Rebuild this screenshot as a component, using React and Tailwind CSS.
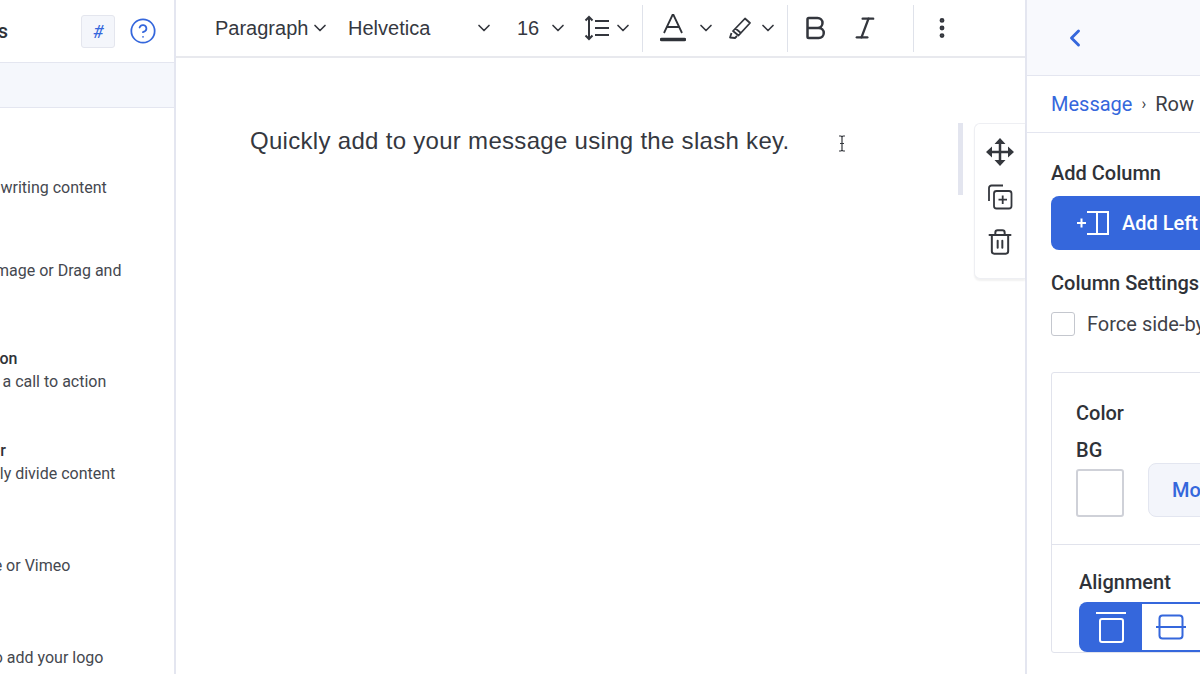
import React from "react";
import { ChevronDown, ChevronLeft, Bold, Italic, MoreVertical, Trash2, HelpCircle } from "lucide-react";

const ui = { fontFamily: "Roboto, sans-serif" };
const helv = { fontFamily: "'Liberation Sans', Arial, sans-serif" };

const rows = [
  { h: "h-[84px]", ml: "ml-[-38px]", t: "Text", d: "Start writing content" },
  { h: "h-[112px]", ml: "ml-[-63px]", t: "Image", d: "Upload image or Drag and" },
  { h: "h-[93px]", ml: "ml-[-30px]", t: "Button", d: "Add a call to action" },
  { h: "h-[93px]", ml: "ml-[-44px]", t: "Divider", d: "Visually divide content" },
  { h: "h-[93px]", ml: "ml-[-60px]", t: "Video", d: "YouTube or Vimeo" },
  { h: "h-[93px]", ml: "ml-[-50px]", t: "Logo", d: "Click to add your logo" },
];

function Chev({ className = "" }) {
  return <ChevronDown size={20} strokeWidth={2} className={`text-[#33363d] ${className}`} />;
}

function Sep({ className = "" }) {
  return <div className={`w-px h-[47px] bg-[#dfe2ea] ${className}`} />;
}

function Toolbar() {
  return (
    <div className="h-[58px] shrink-0 flex items-center bg-white border-b-2 border-[#e8e9ee] text-[#35383f] text-[20px]" style={helv}>
      <span className="ml-[39px] w-[99px]">Paragraph</span>
      <Chev className="ml-[-4px]" />
      <span className="ml-[18px] w-[126px]">Helvetica</span>
      <Chev />
      <span className="ml-[23px] w-[30px]">16</span>
      <Chev className="ml-[1px]" />
      <svg className="ml-[15px]" width="28" height="28" viewBox="0 0 28 28" fill="none" stroke="#33363d" strokeWidth="2">
        <path d="M6 3v22M2.5 6.5 6 3l3.5 3.5M2.500 21.500 6 25l3.500-3.500" />
        <path d="M12 7h14M12 14h14M12 21h14" />
      </svg>
      <Chev className="ml-[2px]" />
      <Sep className="ml-[9px]" />
      <svg className="ml-[17px]" width="26" height="30" viewBox="0 0 26 30" fill="none" stroke="#2f3238" strokeWidth="1.800">
        <path d="M4 20 12.500 2h1L22 20M7 14h12" />
        <path d="M1.500 26.500h23" strokeWidth="3.500" strokeLinecap="round" />
      </svg>
      <Chev className="ml-[10px]" />
      <svg className="ml-[10px]" width="28" height="26" viewBox="0 0 28 26" fill="none" stroke="#33363d" strokeWidth="1.800" strokeLinejoin="round">
        <path d="M7 16 19 3.500l5 4.500L12.500 20.500ZM9.500 13.500l6 5M5.500 18 4 22.500l5 .5 2-2" />
      </svg>
      <Chev className="ml-[4px]" />
      <Sep className="ml-[9px]" />
      <Bold size={30} strokeWidth={2} className="ml-[12px] text-[#33363d]" />
      <Italic size={28} strokeWidth={2} className="ml-[21px] text-[#33363d]" />
      <Sep className="ml-[34px]" />
      <MoreVertical size={26} strokeWidth={2.500} className="ml-[15px] text-[#33363d]" />
    </div>
  );
}

function SideActions() {
  return (
    <div className="absolute top-[123px] right-0 w-[51px] h-[156px] bg-white rounded-l-md border-l border-b border-t border-[#eeeff3] shadow-[0_2px_2px_rgba(0,0,0,0.06)] flex flex-col items-center pt-[14px] gap-[19px] text-[#34373d]">
      <svg width="28" height="28" viewBox="0 0 28 28" fill="#34373d" stroke="#34373d" strokeWidth="2.500">
        <path d="M14 4v20M4 14h20" />
        <path strokeWidth="0" d="M14 0l5.500 6h-11ZM14 28l5.500-6h-11ZM0 14l6-5.500v11ZM28 14l-6-5.500v11Z" />
      </svg>
      <svg width="26" height="26" viewBox="0 0 26 26" fill="none" stroke="#34373d" strokeWidth="1.800" className="mt-[-1px]">
        <path d="M2 17V4a2.500 2.500 0 0 1 2.500-2.500H16" />
        <rect x="7" y="7" width="17.500" height="17.500" rx="2.500" />
        <path d="M11.500 15.700h8.500M15.700 11.500V20" />
      </svg>
      <Trash2 size={28} strokeWidth={1.700} className="mt-[-1px]" />
    </div>
  );
}

function LeftPanel() {
  return (
    <aside className="w-[176px] shrink-0 h-full bg-white border-r-2 border-[#e4e6f0] overflow-hidden flex flex-col" style={ui}>
      <div className="h-[63px] shrink-0 flex items-center border-b border-[#e4e6f0] pr-[17px]">
        <span className="ml-[-100px] w-[108px] text-[20px] font-medium text-[#2f3238] text-right">Elements</span>
        <div className="ml-auto flex items-center gap-[14px]">
          <div className="w-[34px] h-[33px] rounded-[3px] bg-[#f4f6fb] border border-[#e4e6ee] flex items-center justify-center text-[#3567dc] text-[18px] italic">#</div>
          <HelpCircle size={28} strokeWidth={1.500} className="text-[#3567dc]" />
        </div>
      </div>
      <div className="h-[45px] shrink-0 bg-[#f5f7fc] border-b border-[#e4e6f0]" />
      <div className="pt-[46px] text-[16px] leading-[24px] text-[#45484f]">
        {rows.map((r) => (
          <div key={r.t} className={`${r.h} ${r.ml} whitespace-nowrap`}>
            <div className="font-medium text-[#2f3238] mt-[-1px] leading-[23px]">{r.t}</div>
            <div>{r.d}</div>
          </div>
        ))}
      </div>
    </aside>
  );
}

function RightPanel() {
  return (
    <aside className="flex-1 min-w-0 h-full bg-white border-l-2 border-[#e4e6f0] overflow-hidden flex flex-col" style={ui}>
      <div className="h-[76px] shrink-0 bg-[#f8f9fd] border-b border-[#e4e6f0] flex items-center pl-[34px]">
        <ChevronLeft size={28} strokeWidth={2.500} className="text-[#3567dc]" />
      </div>
      <div className="h-[57px] shrink-0 border-b border-[#e4e6f0] flex items-center pl-[24px] whitespace-nowrap text-[20px] text-[#3a3d44]">
        <span className="text-[#3567dc]">Message</span>
        <span className="mx-[9px] text-[16px]">›</span>
        <span>Row</span>
      </div>
      <div className="pl-[24px] w-[400px]">
        <div className="mt-[27px] text-[20px] leading-[26px] font-medium text-[#2f3238]">Add Column</div>
        <div className="mt-[10px] w-[300px] h-[54px] rounded-lg bg-[#3567dc] flex items-center pl-[25px] text-white text-[20px] font-medium">
          <svg width="34" height="26" viewBox="0 0 34 26" fill="none" stroke="#fff" strokeWidth="2" className="mr-[12px]">
            <path d="M1 13h9M5.500 8.500v9M11 2h21v22H11M21 2v22" />
          </svg>
          Add Left
        </div>
        <div className="mt-[20px] text-[20px] leading-[26px] font-medium text-[#2f3238]">Column Settings</div>
        <div className="mt-[13px] flex items-center text-[20px] text-[#3f4249]">
          <div className="w-[24px] h-[24px] rounded-[3px] border border-[#c4c7ce] bg-white mr-[12px]" />
          Force side-by-side
        </div>
        <div className="mt-[33px] w-[300px] border border-[#e1e3ec] rounded-[3px]">
          <div className="h-[172px] border-b border-[#e1e3ec] pl-[24px] pt-[27px] text-[#2f3238]">
            <div className="text-[20px] leading-[26px] font-medium">Color</div>
            <div className="mt-[11px] text-[20px] leading-[26px] font-medium">BG</div>
            <div className="mt-[-4px] flex items-end gap-[24px]">
              <div className="w-[48px] h-[48px] mt-[10px] rounded-[3px] border-2 border-[#cfd1d8] bg-white" />
              <div className="w-[120px] h-[54px] rounded-lg bg-[#f3f5fb] border border-[#e3e6f0] flex items-center pl-[23px] text-[#3567dc] text-[20px] font-medium">More</div>
            </div>
          </div>
          <div className="pl-[27px] pt-[24px]">
            <div className="text-[20px] leading-[26px] font-medium text-[#2f3238]">Alignment</div>
            <div className="mt-[7px] flex h-[50px]">
              <div className="w-[63px] bg-[#3567dc] rounded-l-lg flex items-center justify-center">
                <svg width="30" height="32" viewBox="0 0 30 32" fill="none" stroke="#fff" strokeWidth="2">
                  <path d="M0 2h30" />
                  <rect x="4" y="8" width="23" height="23" rx="2" />
                </svg>
              </div>
              <div className="w-[100px] border-y-2 border-[#3567dc] flex items-center pl-[14px]">
                <svg width="30" height="26" viewBox="0 0 30 26" fill="none" stroke="#3567dc" strokeWidth="2">
                  <rect x="3.500" y="1.500" width="23" height="23" rx="3" />
                  <path d="M0 13h30" />
                </svg>
              </div>
            </div>
          </div>
        </div>
      </div>
    </aside>
  );
}

export default function App() {
  return (
    <div className="w-[1200px] h-[674px] flex overflow-hidden bg-white">
      <LeftPanel />
      <main className="w-[849px] shrink-0 h-full relative flex flex-col bg-white">
        <Toolbar />
        <div className="pl-[74px] pt-[66px] text-[24px] leading-[34px] tracking-[0.3px] text-[#35383f]" style={helv}>
          Quickly add to your message using the slash key.
        </div>
        <div className="absolute left-[782px] top-[123px] w-[5px] h-[72px] bg-[#e3e5ef]" />
        <SideActions />
        <svg className="absolute left-[660px] top-[135px]" width="12" height="17" viewBox="0 0 12 17" fill="none" stroke="#34373d" strokeWidth="1.200">
          <path d="M3 1h2l1 1 1-1h2M6 2v13M3 16h2l1-1 1 1h2M4 8.500h4" />
        </svg>
      </main>
      <RightPanel />
    </div>
  );
}
